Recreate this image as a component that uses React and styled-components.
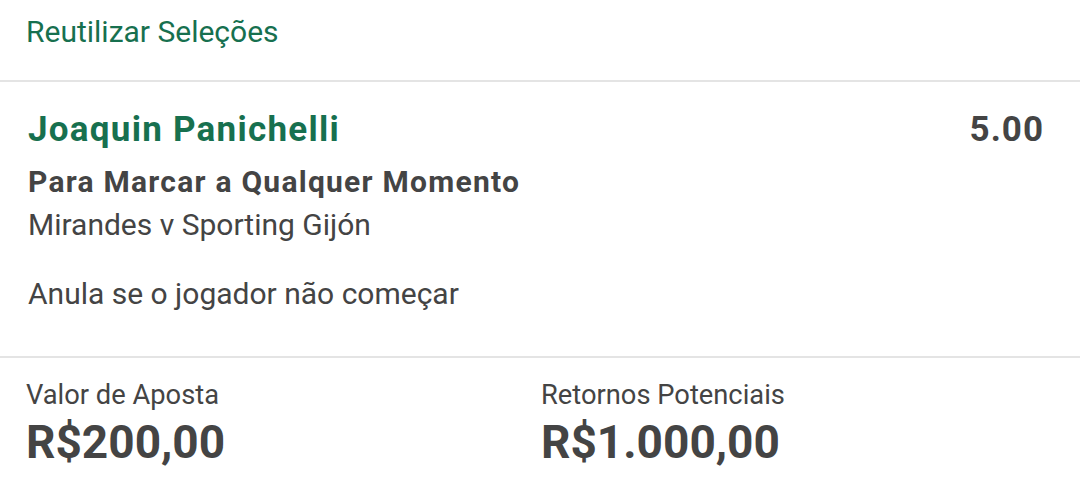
import React from 'react';
import styled, { createGlobalStyle } from 'styled-components';

const Global = createGlobalStyle`
  html, body {
    margin: 0;
    padding: 0;
    background: #fff;
    font-family: Roboto, "Noto Sans", sans-serif;
  }
`;

const Page = styled.div`
  width: 1080px;
  height: 485px;
  overflow: hidden;
  background: #fff;
`;

const ReuseBar = styled.div`
  height: 82px;
  padding: 15px 26px 0;
  box-sizing: border-box;
  border-bottom: 2px solid #e4e4e4;
`;

const ReuseLink = styled.span`
  display: block;
  color: #17704f;
  font-size: 30px;
  line-height: 34px;
`;

const Selection = styled.div`
  display: flex;
  justify-content: space-between;
  padding: 28px 36px 0 28px;
  height: 276px;
  box-sizing: border-box;
  border-bottom: 2px solid #e4e4e4;
`;

const Info = styled.div`
  display: flex;
  flex-direction: column;
`;

const Player = styled.div`
  color: #17704f;
  font-size: 35px;
  font-weight: 700;
  letter-spacing: 1.25px;
  line-height: 40px;
`;

const Market = styled.div`
  color: #444;
  font-size: 30px;
  font-weight: 700;
  letter-spacing: 1.25px;
  line-height: 40px;
  margin-top: 12px;
`;

const Line = styled.div`
  color: #444;
  font-size: 30px;
  line-height: 40px;
  margin-top: ${p => p.gap}px;
`;

const Odds = styled.div`
  color: #444;
  font-size: 35px;
  font-weight: 700;
  letter-spacing: 1px;
  line-height: 40px;
`;

const Totals = styled.div`
  display: grid;
  grid-template-columns: 515px 1fr;
  padding: 20px 26px 0;
`;

const Cell = styled.div`
  display: flex;
  flex-direction: column;
`;

const Label = styled.div`
  color: #444;
  font-size: 27.3px;
  line-height: 34px;
`;

const Amount = styled.div`
  color: #444;
  font-size: 46px;
  font-weight: 700;
  line-height: 56px;
  margin-top: 2px;
`;

export default function App() {
  return (
    <Page>
      <Global />
      <ReuseBar>
        <ReuseLink>Reutilizar Seleções</ReuseLink>
      </ReuseBar>
      <Selection>
        <Info>
          <Player>Joaquin Panichelli</Player>
          <Market>Para Marcar a Qualquer Momento</Market>
          <Line gap={3}>Mirandes v Sporting Gijón</Line>
          <Line gap={29}>Anula se o jogador não começar</Line>
        </Info>
        <Odds>5.00</Odds>
      </Selection>
      <Totals>
        <Cell>
          <Label>Valor de Aposta</Label>
          <Amount>R$200,00</Amount>
        </Cell>
        <Cell>
          <Label>Retornos Potenciais</Label>
          <Amount>R$1.000,00</Amount>
        </Cell>
      </Totals>
    </Page>
  );
}
